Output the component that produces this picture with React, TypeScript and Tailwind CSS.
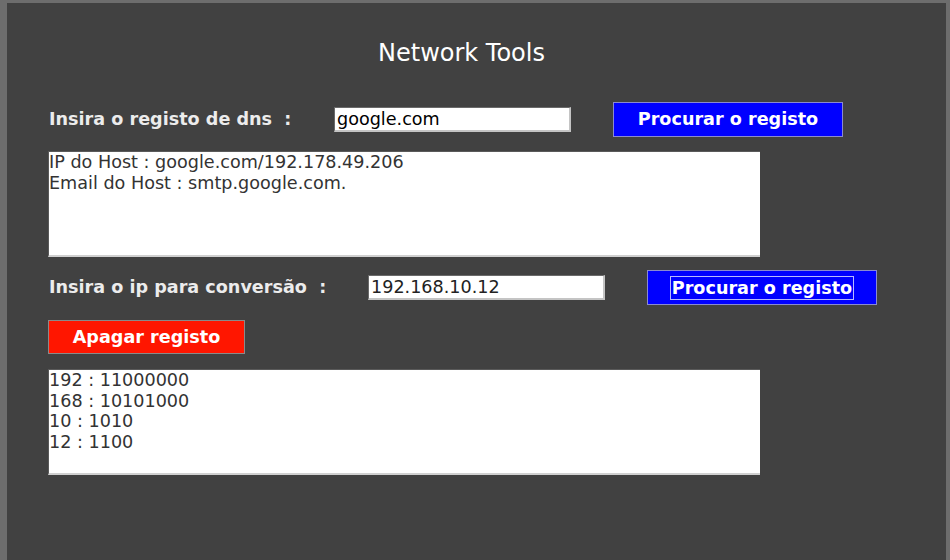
import React from "react";

export default function App() {
  const font = { fontFamily: '"DejaVu Sans", "Liberation Sans", sans-serif' };

  return (
    <div
      className="w-[950px] h-[560px] bg-[#6d6d6d] pl-[7px] pt-[3px] pr-[4px] overflow-hidden"
      style={font}
    >
      <div className="h-full bg-[#414141] pl-[41px]">
        {/* title */}
        <div className="pt-[35px] h-[99px] pl-[330px]">
          <h1 className="text-[24px] leading-[30px] text-white font-normal">Network Tools</h1>
        </div>

        {/* dns row */}
        <div className="flex items-center h-[35px]">
          <label className="w-[286px] pl-[1px] text-[17.6px] font-bold text-[#ececec]">
            Insira o registo de dns&nbsp; :
          </label>
          <input
            readOnly
            value="google.com"
            className="w-[237px] h-[25px] bg-white text-black text-[17.6px] pl-[2px] outline-none border-t border-l border-t-[#6a6a6a] border-l-[#6a6a6a] border-b-2 border-r-2 border-b-[#c4c4c4] border-r-[#c4c4c4]"
          />
          <button className="ml-[42px] w-[230px] h-[35px] bg-[#0000ff] border border-[#8a8ad0] text-white font-bold text-[17.6px]">
            Procurar o registo
          </button>
        </div>

        <textarea
          readOnly
          value={"IP do Host : google.com/192.178.49.206\nEmail do Host : smtp.google.com."}
          className="block mt-[14px] w-[712px] h-[106px] bg-white text-[#333] text-[17.6px] leading-[21px] p-0 resize-none outline-none border-t border-l border-[#5a5a5a] border-b-2 border-r-0 border-b-[#d0d0d0]"
        />

        {/* ip row */}
        <div className="flex items-center h-[35px] mt-[13px]">
          <label className="w-[320px] pl-[1px] text-[17.6px] font-bold text-[#ececec]">
            Insira o ip para conversão&nbsp; :
          </label>
          <input
            readOnly
            value="192.168.10.12"
            className="w-[237px] h-[25px] bg-white text-[#222] text-[17.6px] pl-[2px] outline-none border-t border-l border-t-[#6a6a6a] border-l-[#6a6a6a] border-b-2 border-r-2 border-b-[#c4c4c4] border-r-[#c4c4c4]"
          />
          <button className="ml-[42px] w-[230px] h-[35px] bg-[#0000ff] border border-[#8a8ad0] text-white font-bold text-[17.6px] flex items-center justify-center">
            <span className="border border-[#b8b8ff] px-[1px] leading-[22px]">Procurar o registo</span>
          </button>
        </div>

        <button className="block mt-[15px] w-[197px] h-[34px] bg-[#ff1600] border border-[#8a8a8a] text-white font-bold text-[17.6px]">
          Apagar registo
        </button>

        <textarea
          readOnly
          value={"192 : 11000000\n168 : 10101000\n10 : 1010\n12 : 1100"}
          className="block mt-[15px] w-[712px] h-[106px] bg-white text-[#333] text-[17.6px] leading-[20.7px] p-0 resize-none outline-none border-t border-l border-[#5a5a5a] border-b-2 border-r-0 border-b-[#d0d0d0]"
        />
      </div>
    </div>
  );
}
